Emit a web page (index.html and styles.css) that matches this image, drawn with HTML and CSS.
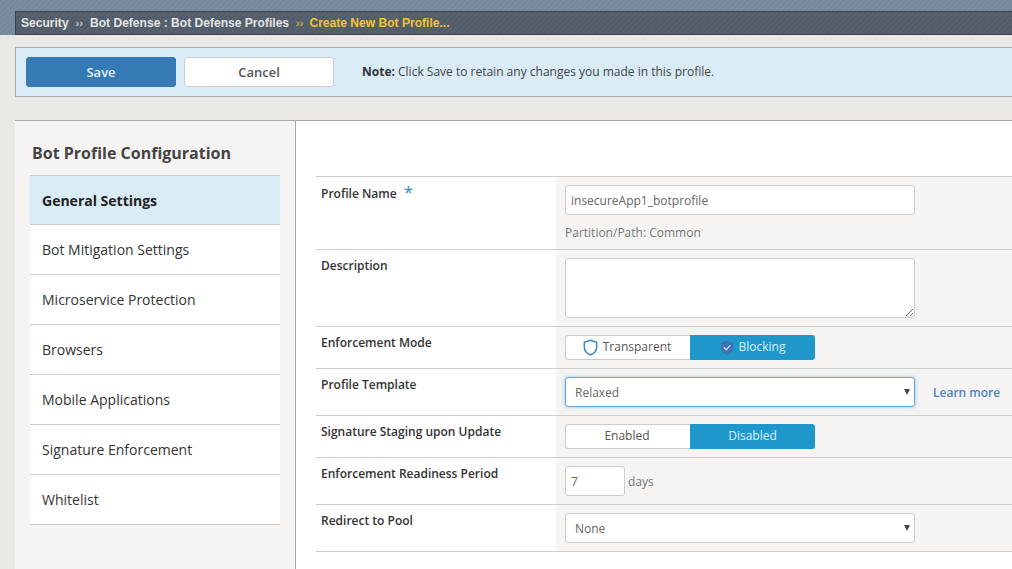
FILE: index.html
```html
<!DOCTYPE html>
<html lang="en">
  <head>
    <meta charset="UTF-8" />
    <title>Create New Bot Profile</title>
    <link rel="stylesheet" href="styles.css">
  </head>
  <body>
    <header class="top-band">
      <nav class="breadcrumb">
        <span>Security</span>
        <span class="sep">››</span>
        <span>Bot Defense : Bot Defense Profiles</span>
        <span class="sep sep-near">››</span>
        <span class="current">Create New Bot Profile...</span>
      </nav>
    </header>

    <section class="action-bar">
      <button class="btn btn-save">Save</button>
      <button class="btn btn-cancel">Cancel</button>
      <p class="note"><strong>Note:</strong> Click Save to retain any changes you made in this profile.</p>
    </section>

    <main class="panel">
      <aside class="sidebar">
        <h2>Bot Profile Configuration</h2>
        <ul class="menu">
          <li class="active">General Settings</li>
          <li>Bot Mitigation Settings</li>
          <li>Microservice Protection</li>
          <li>Browsers</li>
          <li>Mobile Applications</li>
          <li>Signature Enforcement</li>
          <li>Whitelist</li>
        </ul>
      </aside>

      <div class="content">
        <div class="form">
          <div class="row">
            <div class="label">Profile Name <span class="req">*</span></div>
            <div class="value">
              <input class="field field-wide" type="text" value="insecureApp1_botprofile" />
              <div class="hint">Partition/Path: Common</div>
            </div>
          </div>
          <div class="row">
            <div class="label">Description</div>
            <div class="value"><textarea class="field field-wide field-area"></textarea></div>
          </div>
          <div class="row">
            <div class="label">Enforcement Mode</div>
            <div class="value">
              <div class="toggle">
                <div class="opt">
                  <svg class="shield" viewBox="0 0 16 18" width="15" height="17">
                    <path d="M8 1.2 14.6 3.4V8.6C14.6 12.4 11.8 15.2 8 16.8 4.2 15.2 1.4 12.4 1.4 8.6V3.4Z" fill="none" stroke="#3a87c8" stroke-width="1.6" />
                  </svg>
                  Transparent
                </div>
                <div class="opt on">
                  <svg class="shield" viewBox="0 0 16 18" width="14" height="16">
                    <path d="M8 .6 15 3V8.6C15 12.6 12 15.6 8 17.4 4 15.6 1 12.6 1 8.6V3Z" fill="#3f72b5" />
                    <path d="M4.4 8.4 7.1 11 11.8 6" fill="none" stroke="#dcebf6" stroke-width="1.3" />
                  </svg>
                  Blocking
                </div>
              </div>
            </div>
          </div>
          <div class="row">
            <div class="label">Profile Template</div>
            <div class="value value-inline">
              <div class="select select-focus">Relaxed</div>
              <a class="learn" href="#">Learn more</a>
            </div>
          </div>
          <div class="row">
            <div class="label">Signature Staging upon Update</div>
            <div class="value">
              <div class="toggle">
                <div class="opt">Enabled</div>
                <div class="opt on">Disabled</div>
              </div>
            </div>
          </div>
          <div class="row">
            <div class="label">Enforcement Readiness Period</div>
            <div class="value value-inline">
              <input class="field field-small" type="text" value="7" />
              <span class="unit">days</span>
            </div>
          </div>
          <div class="row row-last">
            <div class="label">Redirect to Pool</div>
            <div class="value">
              <div class="select">None</div>
            </div>
          </div>
        </div>
      </div>
    </main>
  </body>
</html>
```

FILE: styles.css
```css
html,
body {
  height: 100%;
}
body {
  margin: 0;
  height: 569px;
  overflow: hidden;
  background: #e9e8e4;
  font-family: "Open Sans", sans-serif;
  color: #333;
}

.top-band {
  height: 35px;
  padding: 11px 0 0 15px;
  box-sizing: border-box;
  background: repeating-linear-gradient(135deg, #76889b 0, #76889b 2px, #7a8c9f 2px, #7a8c9f 4px);
}
.breadcrumb {
  height: 24px;
  box-sizing: border-box;
  padding-left: 5px;
  display: flex;
  align-items: center;
  border-top: 1px solid #3a444e;
  border-bottom: 1px solid #39424b;
  border-left: 1px solid #39424b;
  background: repeating-linear-gradient(135deg, #525d69 0, #525d69 2px, #56616d 2px, #56616d 4px);
  font-family: "Liberation Sans", Arial, sans-serif;
  font-size: 12px;
  font-weight: bold;
  letter-spacing: 0.03px;
  color: #e4e4e4;
}
.sep {
  margin: 0 7px;
  font-size: 11px;
  color: #c4c8cc;
}
.sep-near {
  margin-right: 6px;
  color: #d6b24a;
}
.current {
  color: #f4c430;
}

.action-bar {
  display: flex;
  align-items: center;
  height: 50px;
  box-sizing: border-box;
  margin: 12px 0 0 15px;
  padding-left: 10px;
  border: 1px solid #aaa;
  border-right: none;
  background: #d9ebf5;
}
.btn {
  width: 150px;
  height: 30px;
  border-radius: 3px;
  font-family: "Open Sans", sans-serif;
  font-size: 13px;
  font-weight: 600;
  cursor: pointer;
}
.btn-save {
  background: #3579b5;
  border: 1px solid #3579b5;
  color: #e6eff6;
}
.btn-cancel {
  margin-left: 8px;
  background: #fff;
  border: 1px solid #ccc;
  color: #555;
}
.note {
  margin: -2px 0 0 28px;
  font-size: 12px;
  color: #444;
}
.note strong {
  color: #333;
}

.panel {
  display: flex;
  margin: 23px 0 0 15px;
  height: 449px;
  border-top: 1px solid #aaa;
}
.sidebar {
  width: 280px;
  flex: none;
  border-right: 1px solid #aaa;
  background: #f5f4f2;
}
.sidebar h2 {
  margin: 0;
  padding: 21px 0 0 17px;
  height: 54px;
  box-sizing: border-box;
  font-size: 16px;
  line-height: 22px;
  font-weight: bold;
  color: #444;
}
.menu {
  list-style: none;
  margin: 0 0 0 15px;
  padding: 0;
  width: 250px;
  border-top: 1px solid #ccc;
}
.menu li {
  height: 50px;
  box-sizing: border-box;
  padding-left: 12px;
  display: flex;
  align-items: center;
  background: #fff;
  border-bottom: 1px solid #ccc;
  font-size: 14px;
  color: #333;
}
.menu li.active {
  height: 49px;
  background: #d9ebf5;
  font-weight: bold;
  color: #222;
}

.content {
  flex: 1;
  background: #fff;
  padding: 55px 0 0 20px;
}
.row {
  display: flex;
  border-top: 1px solid #ccc;
}
.row-last {
  border-bottom: 1px solid #ccc;
}
.label {
  width: 240px;
  flex: none;
  box-sizing: border-box;
  padding: 7px 0 0 5px;
  font-size: 12px;
  line-height: 17px;
  font-weight: 600;
  color: #333;
}
.row:first-child .label {
  padding-top: 8px;
}
.req {
  margin-left: 4px;
  font-size: 17px;
  line-height: 10px;
  font-weight: normal;
  color: #3a87c8;
}
.value {
  flex: 1;
  padding: 8px 9px;
  background: #f5f4f2;
}
.value-inline {
  display: flex;
  align-items: center;
}
.field {
  display: block;
  box-sizing: border-box;
  height: 30px;
  padding: 0 5px;
  background: #fff;
  border: 1px solid #ccc;
  border-radius: 3px;
  font-family: "Open Sans", sans-serif;
  font-size: 12px;
  color: #666;
}
.field-wide {
  width: 350px;
}
.field-area {
  height: 60px;
}
.field-small {
  width: 60px;
}
.hint {
  margin-top: 9px;
  height: 17px;
  font-size: 12px;
  line-height: 17px;
  color: #777;
}
.unit {
  margin-left: 3px;
  font-size: 12px;
  color: #777;
}

.toggle {
  display: flex;
  width: 250px;
  height: 25px;
  box-sizing: border-box;
}
.opt {
  width: 125px;
  padding: 0 2px 2px 0;
  display: flex;
  align-items: center;
  justify-content: center;
  gap: 3px;
  box-sizing: border-box;
  background: #fff;
  border: 1px solid #ccc;
  border-right: none;
  border-radius: 3px 0 0 3px;
  font-size: 12px;
  color: #555;
}
.opt.on {
  padding-right: 0;
  background: #2097cb;
  border: none;
  border-radius: 0 3px 3px 0;
  color: #dcf0f8;
}
.shield {
  margin: 2px 2px 0 0;
}

.select {
  position: relative;
  width: 350px;
  height: 30px;
  box-sizing: border-box;
  padding-left: 9px;
  display: flex;
  align-items: center;
  background: #fff;
  border: 1px solid #ccc;
  border-radius: 3px;
  font-size: 12px;
  color: #666;
}
.select::after {
  content: "";
  position: absolute;
  right: 4px;
  top: 11px;
  border-left: 3px solid transparent;
  border-right: 3px solid transparent;
  border-top: 6px solid #444;
}
.select-focus {
  border-color: #62a8e0;
  box-shadow: 0 0 4px rgba(98, 168, 224, 0.6);
}
.learn {
  margin-left: 18px;
  font-size: 12px;
  font-weight: 600;
  color: #4a86c0;
  text-decoration: none;
}
```
